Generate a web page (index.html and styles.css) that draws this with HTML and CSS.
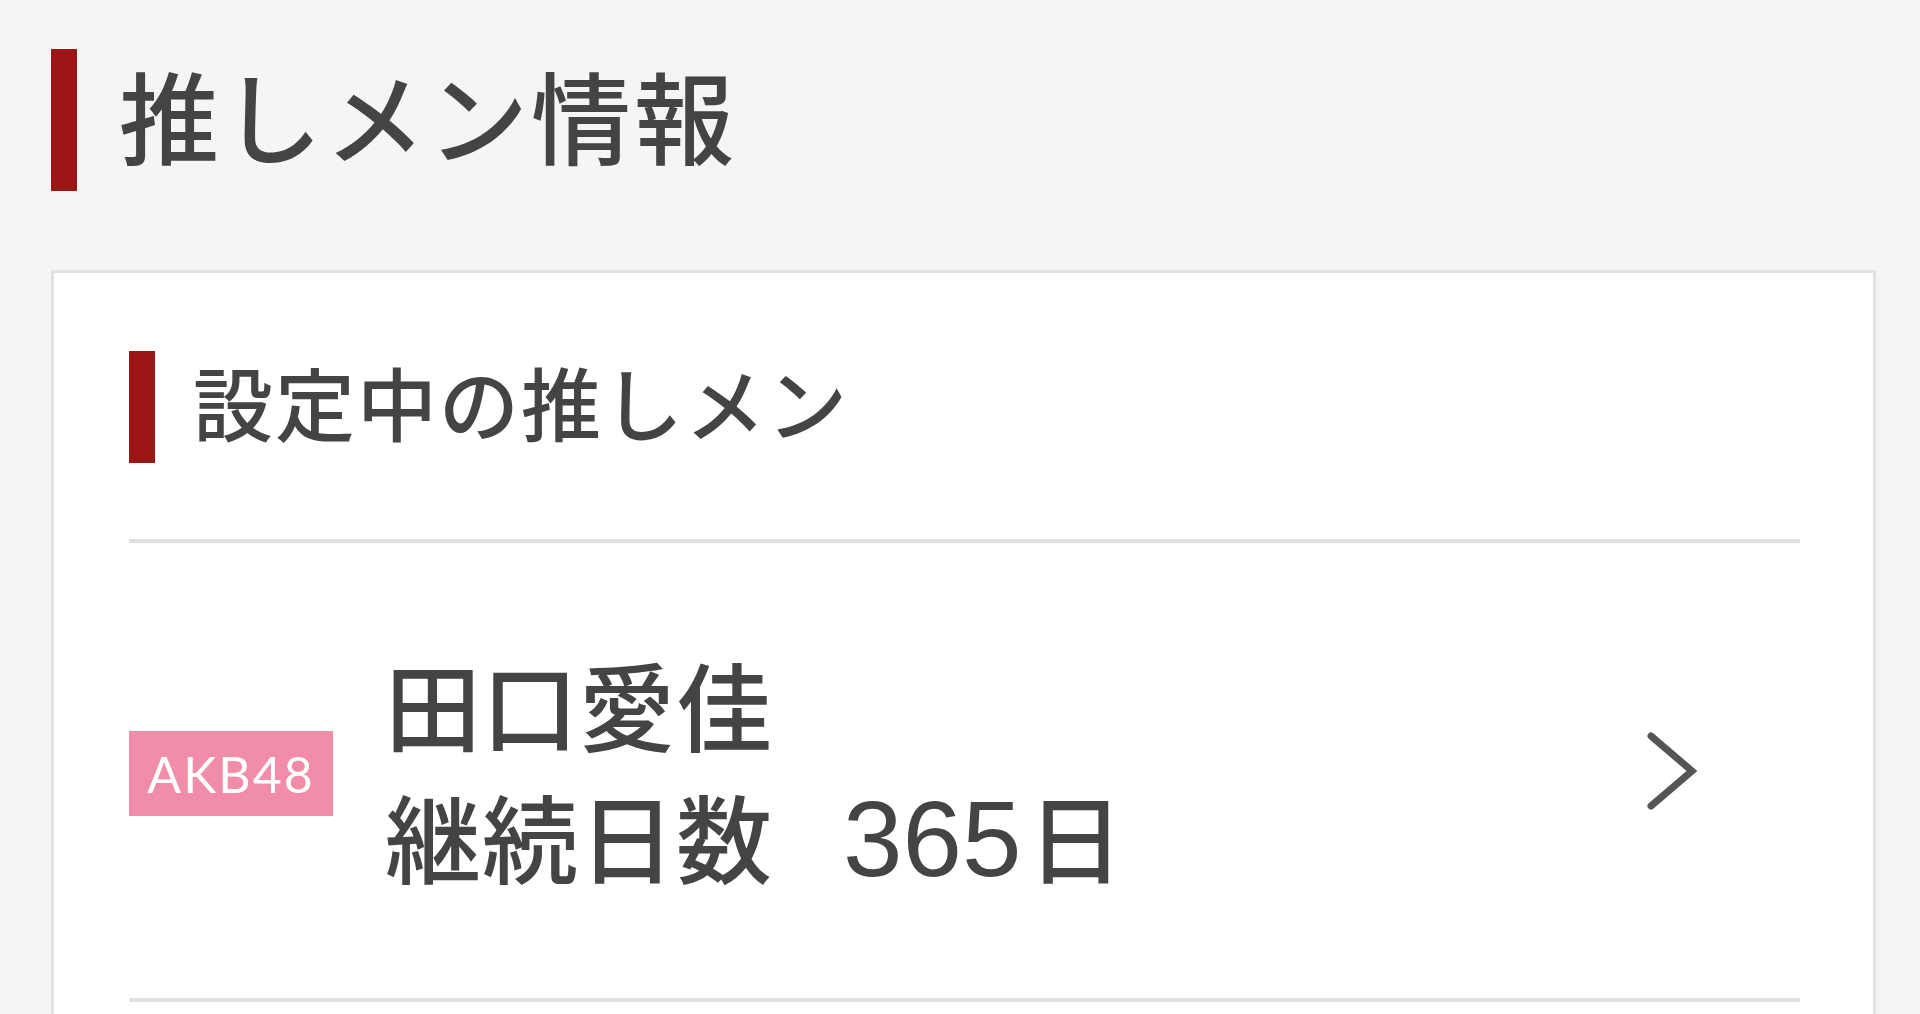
FILE: index.html
```html
<!DOCTYPE html>
<html lang="ja">
<head>
<meta charset="utf-8">
<title>推しメン情報</title>
<link rel="stylesheet" href="styles.css">
</head>
<body>
<main class="page">
  <h1 class="page-title">推しメン情報</h1>
  <section class="card">
    <h2 class="section-title">設定中の推しメン</h2>
    <div class="divider"></div>
    <a class="member-row" href="#">
      <span class="badge">AKB48</span>
      <div class="member-text">
        <div class="member-name">田口愛佳</div>
        <div class="member-days">継続日数<span class="days-num">365</span>日</div>
      </div>
      <svg class="chevron" width="52" height="78" viewBox="0 0 52 78">
        <polyline points="5,4 46,39 5,74" fill="none" stroke="#555" stroke-width="7" stroke-linecap="round" stroke-linejoin="miter"/>
      </svg>
    </a>
    <div class="divider"></div>
    <div class="card-rest"></div>
  </section>
</main>
</body>
</html>
```

FILE: styles.css
```css
html, body {
  margin: 0;
  padding: 0;
  background: #f5f5f5;
  overflow: hidden;
}
body {
  font-family: "Noto Sans CJK JP", "Noto Sans", sans-serif;
  color: #444;
}
.page {
  padding: 49px 44px 0 51px;
}
.page-title {
  margin: 0;
  display: flex;
  align-items: center;
  height: 142px;
  box-sizing: border-box;
  padding-bottom: 12px;
  border-left: 26px solid #9c1616;
  padding-left: 42px;
  font-size: 100px;
  font-weight: 500;
  letter-spacing: 3px;
  line-height: 1;
  color: #444;
}
.card {
  margin-top: 79px;
  background: #fff;
  border: 3px solid #e2e2e2;
  padding: 78px 73px 0 75px;
}
.section-title {
  margin: 0;
  display: flex;
  align-items: center;
  height: 112px;
  box-sizing: border-box;
  padding-bottom: 14px;
  border-left: 26px solid #9c1616;
  padding-left: 38px;
  font-size: 80px;
  font-weight: 500;
  letter-spacing: 2px;
  line-height: 1;
  color: #444;
}
.divider {
  height: 4px;
  background: #e0e0e0;
}
.section-title + .divider {
  margin-top: 76px;
}
.member-row {
  display: flex;
  align-items: center;
  height: 455px;
  text-decoration: none;
  color: inherit;
}
.badge {
  flex: 0 0 auto;
  width: 204px;
  height: 85px;
  margin-top: 6px;
  display: flex;
  align-items: center;
  justify-content: center;
  background: #f18ca9;
  color: #fff;
  font-family: "Lato", "Noto Sans", sans-serif;
  font-size: 50px;
  letter-spacing: 2px;
  line-height: 1;
}
.member-text {
  flex: 1 1 auto;
  margin-left: 52px;
  font-size: 96px;
  font-weight: 500;
  letter-spacing: 1px;
  line-height: 132px;
}
.days-num {
  font-family: "Liberation Sans", Arial, sans-serif;
  font-size: 107px;
  font-weight: 400;
  letter-spacing: 0;
  margin-left: 70px;
  margin-right: 6px;
}
.chevron {
  flex: 0 0 auto;
  margin-right: 102px;
}
.card-rest {
  height: 200px;
}
```
